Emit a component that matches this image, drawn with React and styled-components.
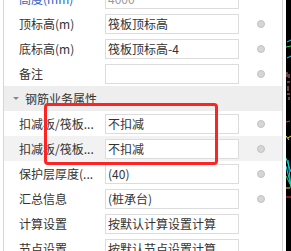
import React from 'react';
import styled, { createGlobalStyle } from 'styled-components';

const GlobalStyle = createGlobalStyle`
  html, body {
    margin: 0;
    padding: 0;
    background: #fff;
  }
  body {
    font-family: 'Noto Sans CJK SC', 'Noto Sans', sans-serif;
    overflow: hidden;
  }
`;

const Screen = styled.div`
  position: relative;
  display: flex;
  width: 291px;
  height: 251px;
  padding-left: 3px;
  box-sizing: border-box;
  overflow: hidden;
`;

const Panel = styled.div`
  width: 280px;
  flex-shrink: 0;
  margin-top: -14px;
  border-left: 1px solid #d6d6d6;
  border-right: 1px solid #d6d6d6;
  box-sizing: border-box;
`;

const Row = styled.div`
  display: grid;
  grid-template-columns: 86px 134px 1fr;
  align-items: center;
  height: 25px;
  padding-left: 15px;
  background: ${(p) => (p.selected ? '#f2f2f2' : '#fff')};
`;

const Label = styled.div`
  font-size: 12px;
  line-height: 18px;
  color: ${(p) => (p.accent ? '#2f62c8' : '#333')};
  white-space: nowrap;
  overflow: hidden;
`;

const Value = styled.div`
  height: 20px;
  padding: 0 2px;
  border: 1px solid #dcdcdc;
  box-sizing: border-box;
  background: #fff;
  font-size: 12px;
  line-height: 18px;
  color: ${(p) => (p.muted ? '#9a9a9a' : '#333')};
  white-space: nowrap;
  overflow: hidden;
`;

const Dot = styled.span`
  justify-self: center;
  width: 8px;
  height: 8px;
  border-radius: 50%;
  background: #d6d6d6;
  border: 1px solid #c2c2c2;
  box-sizing: border-box;
`;

const Section = styled.div`
  display: flex;
  align-items: center;
  gap: 6px;
  height: 25px;
  padding-left: 9px;
  background: #eeeeee;
  font-size: 12px;
  color: #333;
`;

const Caret = styled.span`
  width: 0;
  height: 0;
  border-left: 3px solid transparent;
  border-right: 3px solid transparent;
  border-top: 3px solid #888;
`;

const Gap = styled.div`
  width: 3px;
  flex-shrink: 0;
`;

const Canvas = styled.div`
  flex: 1;
  background: #000;
`;

const Highlight = styled.div`
  position: absolute;
  left: 44px;
  top: 103px;
  width: 174px;
  height: 62px;
  border: 3px solid #ff2424;
  border-radius: 4px;
  box-sizing: border-box;
  pointer-events: none;
`;

const rowsTop = [
  { label: '高度(mm)', value: '4000', accent: true, muted: true },
  { label: '顶标高(m)', value: '筏板顶标高', dot: true },
  { label: '底标高(m)', value: '筏板顶标高-4', dot: true },
  { label: '备注', value: '', dot: true },
];

const rowsRebar = [
  { label: '扣减板/筏板...', value: '不扣减', dot: true },
  { label: '扣减板/筏板...', value: '不扣减', dot: true, selected: true },
  { label: '保护层厚度(...', value: '(40)', dot: true },
  { label: '汇总信息', value: '(桩承台)', dot: true },
  { label: '计算设置', value: '按默认计算设置计算' },
  { label: '节点设置', value: '按默认节点设置计算' },
];

const PropRow = ({ row }) => (
  <Row selected={row.selected}>
    <Label accent={row.accent}>{row.label}</Label>
    <Value muted={row.muted}>{row.value}</Value>
    {row.dot ? <Dot /> : <span />}
  </Row>
);

const CadStrip = () => (
  <svg width="5" height="251" viewBox="0 0 5 251">
    <line x1="1" y1="42" x2="5" y2="40" stroke="#19d3e0" strokeWidth="1" />
    <line x1="0" y1="47" x2="5" y2="46" stroke="#2fd35a" strokeWidth="1" />
    <line x1="1" y1="58" x2="5" y2="56" stroke="#19d3e0" strokeWidth="1" />
    <path d="M1 72 v5 M3 74 v4 M1 82 h3 M2 86 v5 M1 94 h3 M3 97 v3" stroke="#e07a7a" strokeWidth="1" />
    <line x1="0" y1="122" x2="4" y2="121" stroke="#ff2a2a" strokeWidth="1" />
    <path d="M0 136 l3 4 M2 138 l3 -2" stroke="#f0e020" strokeWidth="1" />
    <path d="M0 158 l5 14 M0 166 l5 20 M2 160 l3 28" stroke="#19d3e0" strokeWidth="1" />
    <path d="M0 176 l5 10" stroke="#2fd35a" strokeWidth="1" />
    <path d="M0 188 h4" stroke="#f0e020" strokeWidth="1" />
    <line x1="0" y1="197" x2="5" y2="197" stroke="#ff2a2a" strokeWidth="1" />
  </svg>
);

export default function App() {
  return (
    <>
      <GlobalStyle />
      <Screen>
        <Panel>
          {rowsTop.map((row, i) => (
            <PropRow row={row} key={i} />
          ))}
          <Section>
            <Caret />
            钢筋业务属性
          </Section>
          {rowsRebar.map((row, i) => (
            <PropRow row={row} key={i} />
          ))}
        </Panel>
        <Gap />
        <Canvas>
          <CadStrip />
        </Canvas>
        <Highlight />
      </Screen>
    </>
  );
}
